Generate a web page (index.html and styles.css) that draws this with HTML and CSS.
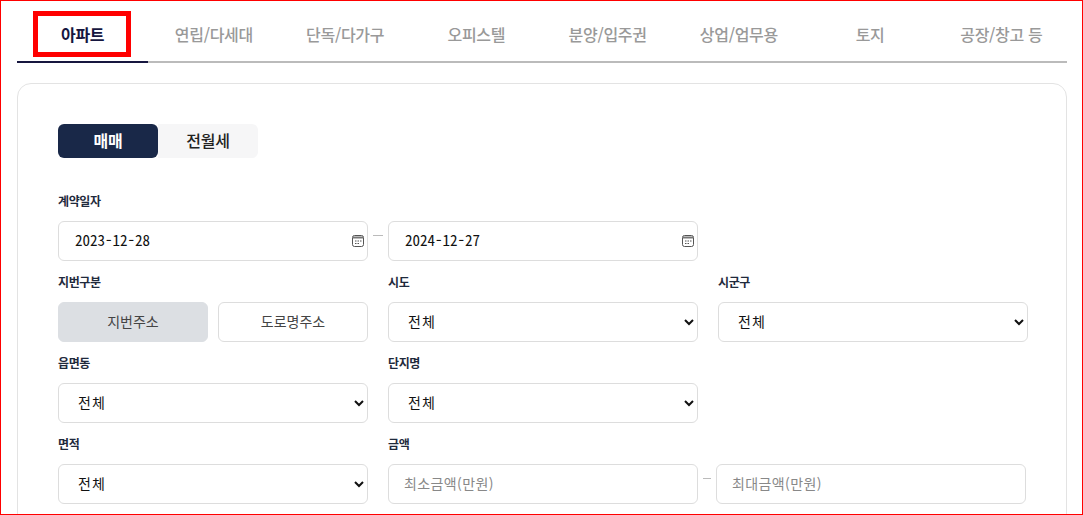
FILE: index.html
```html
<!DOCTYPE html>
<html lang="ko">
<head>
    <meta charset="UTF-8">
    <title>실거래가 조회</title>
    <link rel="stylesheet" href="styles.css">
</head>
<body>
    <div class="page">
        <ul class="tabs">
            <li class="tab active"><span class="mark"></span>아파트</li>
            <li class="tab">연립/다세대</li>
            <li class="tab">단독/다가구</li>
            <li class="tab">오피스텔</li>
            <li class="tab">분양/입주권</li>
            <li class="tab">상업/업무용</li>
            <li class="tab">토지</li>
            <li class="tab">공장/창고 등</li>
        </ul>

        <div class="card">
            <div class="deal-type">
                <div class="deal on">매매</div>
                <div class="deal">전월세</div>
            </div>

            <div class="field">
                <div class="label">계약일자</div>
                <div class="range">
                    <div class="control date">
                        <input type="text" value="2023-12-28">
                        <svg class="cal" viewBox="0 0 12 12"><rect x="0.5" y="0.5" width="11" height="11" rx="2" fill="none" stroke="#555"/><path d="M1 2.5h10" stroke="#777" stroke-width="2"/><path d="M3 6h1.5M5.5 6H7M8 6h1.5M3 8.5h1.5M5.5 8.5H7" stroke="#555"/></svg>
                    </div>
                    <span class="dash"></span>
                    <div class="control date">
                        <input type="text" value="2024-12-27">
                        <svg class="cal" viewBox="0 0 12 12"><rect x="0.5" y="0.5" width="11" height="11" rx="2" fill="none" stroke="#555"/><path d="M1 2.5h10" stroke="#777" stroke-width="2"/><path d="M3 6h1.5M5.5 6H7M8 6h1.5M3 8.5h1.5M5.5 8.5H7" stroke="#555"/></svg>
                    </div>
                </div>
            </div>

            <div class="grid">
                <div class="field">
                    <div class="label">지번구분</div>
                    <div class="addr-type">
                        <div class="addr on">지번주소</div>
                        <div class="addr">도로명주소</div>
                    </div>
                </div>
                <div class="field">
                    <div class="label">시도</div>
                    <select class="control"><option>전체</option></select>
                </div>
                <div class="field">
                    <div class="label">시군구</div>
                    <select class="control"><option>전체</option></select>
                </div>

                <div class="field">
                    <div class="label">읍면동</div>
                    <select class="control"><option>전체</option></select>
                </div>
                <div class="field">
                    <div class="label">단지명</div>
                    <select class="control"><option>전체</option></select>
                </div>
                <div class="field"></div>

                <div class="field">
                    <div class="label">면적</div>
                    <select class="control"><option>전체</option></select>
                </div>
                <div class="field price">
                    <div class="label">금액</div>
                    <div class="price-row">
                        <input class="control amount" type="text" placeholder="최소금액(만원)">
                        <span class="dash"></span>
                        <input class="control amount" type="text" placeholder="최대금액(만원)">
                    </div>
                </div>
            </div>
        </div>
    </div>
</body>
</html>
```

FILE: styles.css
```css
* {
    box-sizing: border-box;
}
html, body {
    height: 100%;
}
body {
    margin: 0;
    overflow: hidden;
    background-color: #fff;
    font-family: "Noto Sans CJK KR", "Noto Sans", sans-serif;
    color: #111;
}
.page {
    height: 515px;
    padding: 0 15px 0 16px;
    border: 1px solid #f00;
    overflow: hidden;
}
.tabs {
    display: flex;
    list-style-type: none;
    margin: 0;
    padding: 0;
    height: 62px;
    border-bottom: 2px solid #bbb;
}
.tab {
    position: relative;
    flex: 1;
    height: 62px;
    padding-top: 21px;
    text-align: center;
    font-size: 16px;
    line-height: 24px;
    font-weight: 500;
    letter-spacing: -0.3px;
    color: #999;
}
.tab.active {
    font-weight: 700;
    color: #16163f;
    border-bottom: 2px solid #16163f;
}
.mark {
    position: absolute;
    left: 16px;
    top: 10px;
    width: 98px;
    height: 46px;
    border: 5px solid #f00;
}
.card {
    margin-top: 20px;
    padding: 40px;
    height: 500px;
    border: 1px solid #e3e3e3;
    border-radius: 14px;
}
.deal-type {
    display: flex;
    width: 200px;
    height: 34px;
    margin-bottom: 33px;
}
.deal {
    flex: 1;
    font-size: 16px;
    line-height: 32px;
    font-weight: 500;
    letter-spacing: -0.2px;
    text-align: center;
    color: #222;
    background-color: #f6f6f7;
    border-radius: 0 6px 6px 0;
}
.deal.on {
    color: #fff;
    font-weight: 700;
    background-color: #192848;
    border-radius: 6px;
}
.label {
    height: 20px;
    margin-bottom: 10px;
    font-size: 12px;
    line-height: 20px;
    font-weight: 700;
    letter-spacing: -0.4px;
    color: #1f2a3c;
}
.field {
    height: 81px;
}
.range, .price-row {
    display: flex;
    align-items: flex-start;
}
.range .control {
    width: 310px;
}
.dash {
    flex: none;
    width: 10px;
    height: 1px;
    margin: 14px 5px 0;
    background-color: #bbb;
}
.price-row .dash {
    width: 8px;
}
.grid {
    display: grid;
    grid-template-columns: 310px 310px 310px;
    column-gap: 20px;
}
.price {
    grid-column: span 2;
}
.control {
    display: block;
    width: 100%;
    height: 40px;
    background-color: #fff;
    border: 1px solid #ddd;
    border-radius: 6px;
    font-family: inherit;
    font-size: 14px;
    color: #111;
}
select.control {
    padding: 0 0 2px 15px;
    letter-spacing: 1px;
    outline: none;
}
.date {
    display: flex;
    align-items: center;
    padding: 0 3px 0 16px;
}
.date input {
    flex: 1;
    min-width: 0;
    border: none;
    outline: none;
    padding: 0 0 3px;
    background: none;
    font-family: "Noto Sans Mono CJK KR", "DejaVu Sans Mono", monospace;
    font-size: 15px;
    font-weight: 300;
    color: #111;
}
.cal {
    width: 12px;
    height: 12px;
}
.addr-type {
    display: flex;
    gap: 10px;
}
.addr {
    flex: 1;
    height: 40px;
    border: 1px solid #ddd;
    border-radius: 6px;
    font-size: 14px;
    line-height: 36px;
    text-align: center;
    color: #444;
}
.addr.on {
    background-color: #dcdfe3;
    border-color: #dcdfe3;
}
.price-row {
    width: 638px;
}
.amount {
    flex: none;
    width: 310px;
    padding: 0 15px 2px;
    outline: none;
    letter-spacing: 0.4px;
}
.amount::placeholder {
    color: #888;
}
```
